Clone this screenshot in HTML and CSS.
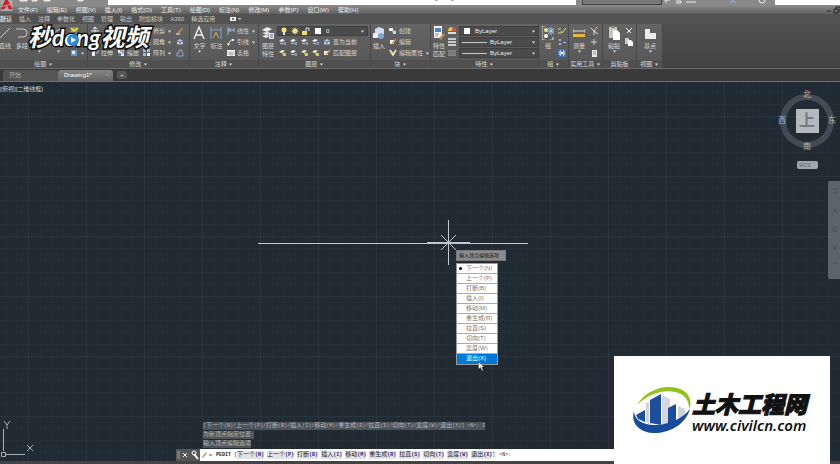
FILE: index.html
```html
<!DOCTYPE html>
<html lang="zh-CN">
<head>
    <meta charset="UTF-8">
    <title>Drawing1.dwg</title>
    <link rel="stylesheet" href="styles.css">
</head>
<body>
<svg class="defs" width="0" height="0">
    <symbol id="caret" viewBox="0 0 4 3"><path d="M0 0h4L2 3z" fill="#ddd"/></symbol>
    <symbol id="move" viewBox="0 0 8 8"><path d="M4 0v8M0 4h8M2 2l2-2 2 2M2 6l2 2 2-2" stroke="#e4e8ec" fill="none"/></symbol>
    <symbol id="copy" viewBox="0 0 8 8"><circle cx="3" cy="3" r="2" fill="none" stroke="#cfd8e0"/><circle cx="5" cy="5" r="2" fill="#cfd8e0"/></symbol>
    <symbol id="stretch" viewBox="0 0 8 8"><path d="M1 2h3v5H1z" fill="#eee"/><path d="M4 1h3v3H5" stroke="#9cb7d6" fill="none"/></symbol>
    <symbol id="scale" viewBox="0 0 8 8"><path d="M1 1h6v6H1z" fill="#eef"/><path d="M1 4h3v3H1z" fill="#4c78b0"/><path d="M3 2h3v3" stroke="#667" fill="none"/></symbol>
    <symbol id="array" viewBox="0 0 8 8"><path d="M0 0h3v3H0zM4 0h3v3H4zM0 4h3v3H0z" fill="#8fc0ee"/><path d="M4 4h3v3H4z" fill="#fff"/></symbol>
    <symbol id="pen" viewBox="0 0 8 8"><path d="M1 6L6 1l1 1-5 5z" fill="#d88b3f"/><path d="M0 7h4" stroke="#eee"/></symbol>
    <symbol id="box" viewBox="0 0 8 8"><path d="M1 3l3-2 3 2v3L4 7 1 6z" fill="#b9cee6"/><path d="M1 3l3 1 3-1M4 4v3" stroke="#5578a2" fill="none"/></symbol>
    <symbol id="offset" viewBox="0 0 8 8"><path d="M1 7V4h2V1h3v3h1v3z" fill="none" stroke="#8fa9c8"/></symbol>
    <symbol id="hatch" viewBox="0 0 8 8"><path d="M1 1h6v6H1z" fill="#6d94c6"/><path d="M2 2h3v3H2z" fill="#e4eefa"/></symbol>
    <symbol id="dim" viewBox="0 0 8 8"><path d="M1 0v8M7 1v4M1 3h6M3 1v4" stroke="#9cc0e6" fill="none"/></symbol>
    <symbol id="leader" viewBox="0 0 8 8"><path d="M1 7l3-5h3" stroke="#ddd" fill="none"/><path d="M0 5l3 1-2 2zM5 1h2v2H5z" fill="#eee"/></symbol>
    <symbol id="grid" viewBox="0 0 8 8"><path d="M0 1h8v6H0z" fill="#fff"/><path d="M0 3h8M0 5h8M3 3v4M5 3v4" stroke="#888" stroke-width=".6"/></symbol>
    <symbol id="layer" viewBox="0 0 8 8"><path d="M0 3l3-2 3 1-3 2z" fill="#f2f2f2"/><path d="M4 4h3v3H5z" fill="#7f9ec4"/><path d="M1 5l3 1" stroke="#ccc"/></symbol>
    <symbol id="layer-y" viewBox="0 0 8 8"><path d="M0 3l3-2 3 1-3 2z" fill="#f3f0c0"/><path d="M3 4h4v3H4z" fill="#d9c94a"/></symbol>
    <symbol id="bulb" viewBox="0 0 8 8"><circle cx="4" cy="3" r="2.5" fill="#f4ea7c"/><path d="M3 5h2v3H3z" fill="#ddd"/></symbol>
    <symbol id="sun" viewBox="0 0 8 8"><circle cx="4" cy="4" r="2.5" fill="#f8f3b0"/><path d="M4 0v8M0 4h8M1 1l6 6M7 1L1 7" stroke="#e5d66a" stroke-width=".6"/></symbol>
    <symbol id="lock" viewBox="0 0 8 8"><path d="M0 4h5v4H0z" fill="#e8de78"/><path d="M4 4V1h3v3" stroke="#ddd" fill="none"/></symbol>
    <symbol id="block" viewBox="0 0 8 8"><path d="M0 1h4v3H0z" fill="#eee"/><path d="M3 3l4 1v3H4z" fill="#c4d6ea"/></symbol>
    <symbol id="edit" viewBox="0 0 8 8"><path d="M1 2h4v4H1z" fill="#eee"/><path d="M3 6l4-5" stroke="#dd9448" stroke-width="1.5"/></symbol>
    <symbol id="tag" viewBox="0 0 8 8"><path d="M1 1l3 5 3-5" stroke="#eee" stroke-width="1.5" fill="none"/><circle cx="3" cy="4" r="1.5" fill="#e0d35e"/></symbol>
    <symbol id="wheel" viewBox="0 0 8 8"><path d="M0 4a4 4 0 0 1 4-4v4z" fill="#e6c640"/><path d="M4 0a4 4 0 0 1 4 4H4z" fill="#ce5b4a"/><path d="M0 5h8v2H0z" fill="#ddd"/></symbol>
    <symbol id="lines" viewBox="0 0 8 8"><path d="M0 1h8M0 4h8M0 7h8" stroke="#eee" stroke-width="1.5"/></symbol>
    <symbol id="lines-g" viewBox="0 0 8 8"><path d="M0 1h8v6H0z" fill="#888"/><path d="M0 3h8M0 5h8" stroke="#6c6c6c"/></symbol>
    <symbol id="check" viewBox="0 0 8 8"><path d="M0 2h3M0 6h3M3 4l1 2 4-5" stroke="#e3db7b" fill="none"/></symbol>
    <symbol id="dots" viewBox="0 0 8 8"><path d="M1 1h2v2H1zM1 5h2v2H1zM5 4h3v1H5z" fill="#9cb9dd"/></symbol>
    <symbol id="brackets" viewBox="0 0 8 8"><path d="M0 0h8v8H0z" fill="#3f74b4"/><path d="M3 2H2v4h1M5 2h1v4H5" stroke="#fff" fill="none"/><path d="M3 3h2v2H3z" fill="#fff"/></symbol>
    <symbol id="filter" viewBox="0 0 8 8"><path d="M1 1l3 3v4M7 0L4 4l4 3" stroke="#e6dfd8" fill="none"/><path d="M5 1h2v2H5z" fill="#d66a50"/></symbol>
    <symbol id="plus" viewBox="0 0 8 8"><path d="M4 1v6M1 4h6" stroke="#ccc"/></symbol>
    <symbol id="calc" viewBox="0 0 8 8"><path d="M2 1h5v7H2z" fill="#e6e6e6"/><path d="M3 3h3M3 5h3" stroke="#777" stroke-width=".7"/></symbol>
    <symbol id="cut" viewBox="0 0 8 8"><path d="M1 1l4 4M7 1L3 5" stroke="#eee" fill="none"/><path d="M2 5h1v1H2zM5 5h1v1H5z" fill="#eee"/></symbol>
    <symbol id="pages" viewBox="0 0 8 8"><path d="M0 0h4v6H0z" fill="#ccc"/><path d="M3 2h3l2 2v4H3z" fill="#fff"/></symbol>
</svg>

<div class="app">
    <header class="titlebar">
        <div class="quick">
            <svg width="82" height="12"><path d="M2 4h7v5H2zM14 3h5v6h-5zM26 3h6v6h-6zM40 7h8M60 5h5v4h-5zM74 6h5" fill="#ddd" stroke="#eee"/></svg>
        </div>
        <h1>Autodesk AutoCAD 2016 - Drawing1.dwg</h1>
        <div class="search">
            <input type="text" aria-label="搜索">
            <svg width="110" height="12"><path d="M2 8h6M4 5v6M14 9h5v2h-5M24 10h10" stroke="#eee" fill="none"/><path d="M68 6l6 5m0-5l-6 5" stroke="#9eb9e0"/><circle cx="100" cy="8" r="3" fill="none" stroke="#eee"/></svg>
        </div>
    </header>
    <svg class="app-logo" viewBox="0 0 13 12"><path d="M0 0h13v12H0z" fill="#aaa"/><path d="M0 10L5 0h3l5 10H9L7 6 4 10z" fill="#c3222a"/><path d="M2 7l8-2" stroke="#f0a0a0"/></svg>

    <nav class="menubar">
        <a href="#">文件(F)</a>
        <a href="#">编辑(E)</a>
        <a href="#">视图(V)</a>
        <a href="#">插入(I)</a>
        <a href="#">格式(O)</a>
        <a href="#">工具(T)</a>
        <a href="#">绘图(D)</a>
        <a href="#">标注(N)</a>
        <a href="#">修改(M)</a>
        <a href="#">参数(P)</a>
        <a href="#">窗口(W)</a>
        <a href="#">帮助(H)</a>
        <svg class="win" width="14" height="8"><path d="M1 5h4" stroke="#222"/><path d="M8 3h4v4H8zM10 3V1h4v4h-2" stroke="#222" fill="none"/></svg>
    </nav>

    <nav class="tabs">
        <a class="selected" href="#">默认</a>
        <a href="#">插入</a>
        <a href="#">注释</a>
        <a href="#">参数化</a>
        <a href="#">视图</a>
        <a href="#">管理</a>
        <a href="#">输出</a>
        <a href="#">附加模块</a>
        <a href="#">A360</a>
        <a href="#">精选应用</a>
        <svg width="12" height="6"><path d="M1 1h6v4H1z" fill="#eee"/><circle cx="4" cy="3" r="1" fill="#555"/><path d="M9 2h3l-1 2z" fill="#ddd"/></svg>
    </nav>

    <div class="ribbon">
        <section class="panel draw">
            <div class="body">
                <button class="big"><svg viewBox="0 0 12 14"><path d="M1 12L11 2" stroke="#ccc"/></svg>直线</button>
                <button class="big"><svg viewBox="0 0 12 14"><path d="M0 3h7a4 4 0 0 1 0 8H2" stroke="#ccc" fill="none"/></svg>多段</button>
                <button class="big mute" aria-label="圆"><svg viewBox="0 0 12 14"><circle cx="6" cy="7" r="5" stroke="#ccc" fill="none"/></svg><svg class="caret"><use href="#caret"/></svg></button>
                <button class="big mute" aria-label="圆弧"><svg viewBox="0 0 12 14"><path d="M1 12Q2 3 11 3" stroke="#ccc" fill="none"/></svg><svg class="caret"><use href="#caret"/></svg></button>
                <div class="col">
                    <button aria-label="矩形"><svg><use href="#offset"/></svg></button>
                    <button aria-label="椭圆"><svg><use href="#copy"/></svg></button>
                    <button aria-label="图案填充"><svg><use href="#hatch"/></svg><svg class="caret"><use href="#caret"/></svg></button>
                </div>
            </div>
            <h2>绘图 <svg class="caret"><use href="#caret"/></svg></h2>
        </section>

        <section class="panel modify">
            <div class="body">
                <div class="col">
                    <button aria-label="移动"><svg><use href="#move"/></svg></button>
                    <button aria-label="复制"><svg><use href="#copy"/></svg></button>
                    <button><svg><use href="#stretch"/></svg>拉伸</button>
                </div>
                <div class="col">
                    <button aria-label="旋转"><svg><use href="#move"/></svg></button>
                    <button aria-label="镜像"><svg><use href="#copy"/></svg></button>
                    <button><svg><use href="#scale"/></svg>缩放</button>
                </div>
                <div class="col">
                    <button><svg><use href="#edit"/></svg>修剪<svg class="caret"><use href="#caret"/></svg></button>
                    <button><svg><use href="#offset"/></svg>圆角<svg class="caret"><use href="#caret"/></svg></button>
                    <button><svg><use href="#array"/></svg>阵列<svg class="caret"><use href="#caret"/></svg></button>
                </div>
                <div class="col">
                    <button aria-label="删除"><svg><use href="#pen"/></svg></button>
                    <button aria-label="分解"><svg><use href="#box"/></svg></button>
                    <button aria-label="偏移"><svg><use href="#offset"/></svg></button>
                </div>
            </div>
            <h2>修改 <svg class="caret"><use href="#caret"/></svg></h2>
        </section>

        <section class="panel note">
            <div class="body">
                <button class="big"><svg viewBox="0 0 12 14"><path d="M1 13L6 1l5 12M3 9h6" stroke="#eee" stroke-width="1.4" fill="none"/></svg>文字<svg class="caret"><use href="#caret"/></svg></button>
                <button class="big"><svg viewBox="0 0 12 14"><path d="M1 1v12M11 1v12M1 4h10" stroke="#7da4d2" fill="none"/><path d="M3 12l3-5 3 5M6 6v3" stroke="#e5a04c" fill="none"/></svg>标注</button>
                <div class="col">
                    <button><svg><use href="#dim"/></svg>线性<svg class="caret"><use href="#caret"/></svg></button>
                    <button><svg><use href="#leader"/></svg>引线<svg class="caret"><use href="#caret"/></svg></button>
                    <button><svg><use href="#grid"/></svg>表格</button>
                </div>
            </div>
            <h2>注释 <svg class="caret"><use href="#caret"/></svg></h2>
        </section>

        <section class="panel layers">
            <div class="body">
                <button class="big"><svg viewBox="0 0 12 14"><path d="M0 4l5-3 5 2-5 3zM0 7l5 2 4-2-4-1zM0 10l4 2 4-2-4-1z" fill="#eee"/><path d="M7 7h5v6H7z" fill="#dfe8f2"/><path d="M8 9h3M8 11h3" stroke="#4f74a4"/></svg>图层<br>特性</button>
                <div class="col">
                    <div class="combo">
                        <svg><use href="#bulb"/></svg><svg><use href="#sun"/></svg><svg><use href="#lock"/></svg><i class="swatch"></i>
                        <select aria-label="图层"><option>0</option></select>
                        <svg class="caret"><use href="#caret"/></svg>
                    </div>
                    <div class="strip">
                        <svg><use href="#layer"/></svg><svg><use href="#layer"/></svg><svg><use href="#layer"/></svg><svg><use href="#layer"/></svg>
                        <button><svg><use href="#box"/></svg>置为当前</button>
                    </div>
                    <div class="strip">
                        <svg><use href="#layer-y"/></svg><svg><use href="#layer"/></svg><svg><use href="#layer-y"/></svg><svg><use href="#layer-y"/></svg>
                        <button><svg><use href="#edit"/></svg>匹配图层</button>
                    </div>
                </div>
            </div>
            <h2>图层 <svg class="caret"><use href="#caret"/></svg></h2>
        </section>

        <section class="panel blocks">
            <div class="body">
                <button class="big"><svg viewBox="0 0 12 14"><path d="M2 3l4-2 5 2v5l-5 1-4-2z" fill="#cfe0f2"/><circle cx="8" cy="10" r="3" fill="#7fa6d4"/><path d="M0 7h5v5H0z" fill="#eee"/></svg>插入</button>
                <div class="col">
                    <button><svg><use href="#block"/></svg>创建</button>
                    <button><svg><use href="#edit"/></svg>编辑</button>
                    <button><svg><use href="#tag"/></svg>编辑属性<svg class="caret"><use href="#caret"/></svg></button>
                </div>
            </div>
            <h2>块 <svg class="caret"><use href="#caret"/></svg></h2>
        </section>

        <section class="panel props">
            <div class="body">
                <button class="big"><svg viewBox="0 0 12 14"><path d="M1 0h8v12H1z" fill="#f2f2f2"/><path d="M2 2h6v4H2z" fill="#4f82c0"/><path d="M2 8h4M2 10h3" stroke="#999"/><path d="M6 12l5-5 1 2-4 5z" fill="#c98542"/></svg>特性<br>匹配</button>
                <div class="col icons">
                    <svg><use href="#wheel"/></svg>
                    <svg><use href="#lines"/></svg>
                    <svg><use href="#lines-g"/></svg>
                </div>
                <div class="col">
                    <div class="combo">
                        <i class="swatch"></i>
                        <select aria-label="对象颜色"><option>ByLayer</option></select>
                        <svg class="caret"><use href="#caret"/></svg>
                    </div>
                    <div class="combo">
                        <i class="rule"></i>
                        <select aria-label="线宽"><option>ByLayer</option></select>
                        <svg class="caret"><use href="#caret"/></svg>
                    </div>
                    <div class="combo">
                        <i class="rule"></i>
                        <select aria-label="线型"><option>ByLayer</option></select>
                        <svg class="caret"><use href="#caret"/></svg>
                    </div>
                </div>
            </div>
            <h2>特性 <svg class="caret"><use href="#caret"/></svg></h2>
        </section>

        <section class="panel group">
            <div class="body">
                <button class="big"><svg viewBox="0 0 12 14"><path d="M3 0H0v14h3M8 14h3v-3" stroke="#ddd" fill="none"/><circle cx="4" cy="4" r="2" fill="#ece68a"/><circle cx="4" cy="10" r="2" fill="#fff"/><path d="M9 1v8M5 5h7M6 2l6 6M12 2L6 8" stroke="#9ed0f8"/></svg>组</button>
                <div class="col icons">
                    <svg><use href="#check"/></svg>
                    <svg><use href="#dots"/></svg>
                    <svg><use href="#brackets"/></svg>
                </div>
            </div>
            <h2>组 <svg class="caret"><use href="#caret"/></svg></h2>
        </section>

        <section class="panel utils">
            <div class="body">
                <button class="big"><svg viewBox="0 0 12 14"><path d="M0 5h12M0 3v4M12 3v4" stroke="#ddd"/><path d="M0 8h12v3H0z" fill="#e2b53c"/></svg>测量<svg class="caret"><use href="#caret"/></svg></button>
                <div class="col icons">
                    <svg><use href="#filter"/></svg>
                    <svg><use href="#plus"/></svg>
                    <svg><use href="#calc"/></svg>
                </div>
            </div>
            <h2>实用工具 <svg class="caret"><use href="#caret"/></svg></h2>
        </section>

        <section class="panel clip">
            <div class="body">
                <button class="big"><svg viewBox="0 0 12 14"><path d="M1 1h8v11H1z" fill="#c9c4b8"/><path d="M3 0h4v2H3z" fill="#888"/><path d="M5 4h4l3 3v7H5z" fill="#fff"/></svg>粘贴<svg class="caret"><use href="#caret"/></svg></button>
                <div class="col icons">
                    <svg><use href="#cut"/></svg>
                    <svg><use href="#pages"/></svg>
                </div>
            </div>
            <h2>剪贴板</h2>
        </section>

        <section class="panel view">
            <div class="body">
                <button class="big"><svg viewBox="0 0 12 14"><path d="M1 3h5v4h6v6H1z" fill="#eee"/></svg>基点<svg class="caret"><use href="#caret"/></svg></button>
            </div>
            <h2>视图 <svg class="caret"><use href="#caret"/></svg></h2>
        </section>
    </div>

    <nav class="files">
        <a href="#">开始</a>
        <a class="selected" href="#">Drawing1*<span>×</span></a>
        <button aria-label="新图形">+</button>
    </nav>

    <main class="canvas">
        <svg class="drawing">
            <defs>
                <pattern id="cells" x="28" y="34" width="58" height="60" patternUnits="userSpaceOnUse">
                    <path d="M12.500 0v60M23.500 0v60M35.500 0v60M46.500 0v60M0 12.500h58M0 24.500h58M0 36.500h58M0 48.500h58" stroke="#242e37"/>
                    <path d="M.5 0v60M0 .5h58" stroke="#2a353e"/>
                </pattern>
            </defs>
            <rect width="100%" height="100%" fill="url(#cells)"/>
            <path d="M258 161.500h270M427 160.500h43M448.500 138v45M441 153l15 15M456 153l-15 15" stroke="#c3c9cd" fill="none"/>
            <path d="M3.500 347v22M6 372.500h19M1.500 370.500h4v4h-4zM4 339l3 4 3-4M7 343v4M27 363l6 6M33 363l-6 6" stroke="#aab0b4" fill="none"/>
        </svg>
        <p class="viewname">[-][俯视][二维线框]</p>

        <div class="cube">
            <span class="n">北</span>
            <span class="w">西</span>
            <button class="face">上</button>
            <span class="e">东</span>
            <span class="s">南</span>
        </div>
        <button class="wcs">WCS</button>
        <div class="navbar">
            <svg width="10" height="96"><path d="M5 8h4M5 12h4M5 28l4 4M9 28l-4 4M5 46h4v4H5zM5 64l2 4 2-4M5 82h4" stroke="#48505a" fill="none"/></svg>
        </div>

        <div class="prompt">输入顶点编辑选项</div>
        <menu class="options">
            <li><button class="default">下一个(N)</button></li>
            <li><button>上一个(P)</button></li>
            <li><button>打断(B)</button></li>
            <li><button>插入(I)</button></li>
            <li><button>移动(M)</button></li>
            <li><button>重生成(R)</button></li>
            <li><button>拉直(S)</button></li>
            <li><button>切向(T)</button></li>
            <li><button>宽度(W)</button></li>
            <li><button class="selected">退出(X)</button></li>
        </menu>
        <svg class="cursor" viewBox="0 0 6 9"><path d="M.5 0v7l2-1.500L4 9l1-.5L4 5h2z" fill="#fff" stroke="#333" stroke-width=".4"/></svg>

        <div class="command">
            <div class="history">
                <p>[<b>下一个</b>(N)/<b>上一个</b>(P)/<b>打断</b>(B)/<b>插入</b>(I)/<b>移动</b>(M)/<b>重生成</b>(R)/<b>拉直</b>(S)/<b>切向</b>(T)/<b>宽度</b>(W)/<b>退出</b>(X)] &lt;N&gt;: I</p>
                <p><b>为新顶点指定位置</b>:</p>
                <p><b>输入顶点编辑选项</b></p>
            </div>
            <div class="line">
                <svg class="grip" width="24" height="12"><path d="M1 2h3v8H1z" fill="#777"/><path d="M7 4l4 4M11 4L7 8" stroke="#fff"/><path d="M18 5l4 5" stroke="#fff" stroke-width="2"/><circle cx="18" cy="4" r="2" fill="none" stroke="#fff"/></svg>
                <svg width="12" height="12"><path d="M2 8l4-5 1 1-4 5z" fill="#a8a668"/><path d="M9 6h3" stroke="#555"/></svg>
                <strong>PEDIT</strong>
                <span>[</span>
                <div class="keys">
                    <button>下一个<kbd>(N)</kbd></button>
                    <button>上一个<kbd>(P)</kbd></button>
                    <button>打断<kbd>(B)</kbd></button>
                    <button>插入<kbd>(I)</kbd></button>
                    <button>移动<kbd>(M)</kbd></button>
                    <button>重生成<kbd>(R)</kbd></button>
                    <button>拉直<kbd>(S)</kbd></button>
                    <button>切向<kbd>(T)</kbd></button>
                    <button>宽度<kbd>(W)</kbd></button>
                    <button>退出<kbd>(X)</kbd></button>
                </div>
                <span>]</span>
                <span class="value">&lt;N&gt;:</span>
            </div>
        </div>
    </main>
    <footer class="status"></footer>
</div>

<div class="brand">
    <span>秒</span><span class="latin">dong</span><span>视频</span>
    <svg class="play" viewBox="0 0 14 20"><path d="M5 1l3 3 4-3" stroke="#f0e020" stroke-width="2" fill="none"/><circle cx="7" cy="13" r="6" fill="#2f86dc"/><path d="M5 10l5 3-5 3z" fill="#fff"/></svg>
</div>

<a class="site" href="#">
    <svg viewBox="0 0 60 48">
        <path d="M30 9l8 4v26h-8z" fill="#d5d7dc"/>
        <path d="M46 20l7 3v9l-7 4zM14 17l3-1v22l-3-2z" fill="#cfd2d7"/>
        <path d="M18 14l11-6v31l-11-2z" fill="#1c4e9e"/>
        <path d="M36 22l8-4v19l-8 2zM4 29l9-5v12l-7-3z" fill="#1c4e9e"/>
        <path d="M5 19C12 6 30-2 45 2c12 3 16 13 12 21 0-9-4-15-14-17C30 3 15 9 5 19z" fill="#93c21f"/>
        <path d="M2 25c0 9 10 15 23 14 14-1 26-7 33-16-4 14-18 23-33 24C10 48-2 39 2 25z" fill="#174a9c"/>
    </svg>
    <span class="name">土木工程网<small>www.civilcn.com</small></span>
</a>
</body>
</html>
```

FILE: styles.css
```css
*{
    margin:0;
    padding:0;
    box-sizing:border-box;
}
body{
    font-family:"Liberation Sans","Noto Sans CJK SC",sans-serif;
    font-size:6px;
    line-height:8px;
    color:#d8d8d8;
    background:#3a3a3a;
    overflow:hidden;
}
button,select,input{
    font:inherit;
    color:inherit;
    background:none;
    border:0;
}
a{
    color:inherit;
    text-decoration:none;
}
h1,h2{
    font-size:6px;
    font-weight:normal;
}
.defs{
    position:absolute;
}
.app{
    display:flex;
    flex-direction:column;
    height:100vh;
}

/* title bar, its upper half is outside of the window */
.titlebar{
    display:flex;
    flex:none;
    justify-content:space-between;
    height:13px;
    margin-top:-8px;
    background:#fff;
    line-height:13px;
    color:#555;
}
.quick{
    width:108px;
    padding-left:18px;
    background:#8a8a8a;
}
.titlebar h1{
    padding-left:114px;
}
.search{
    display:flex;
    width:199px;
    margin-right:65px;
    background:#8a8a8a;
}
.search input{
    width:80px;
    margin-left:6px;
    background:#777;
    border:1px solid #444;
}
.app-logo{
    position:absolute;
    left:0;
    top:0;
    width:13px;
    height:11px;
}
.menubar{
    display:flex;
    flex:none;
    align-items:center;
    gap:9px;
    height:9px;
    padding-left:18px;
    background:linear-gradient(#8c8c8c,#5e5e5e);
    color:#f0f0f0;
}
.menubar .win{
    margin-left:auto;
}
.tabs{
    display:flex;
    flex:none;
    align-items:center;
    gap:7px;
    height:10px;
    background:#525252;
    color:#c8c8c8;
}
.tabs svg{
    margin-left:7px;
}
.tabs .selected{
    background:#696969;
    color:#fff;
}

/* ribbon */
.ribbon{
    display:flex;
    flex:none;
    height:45px;
    background:linear-gradient(#505050,#424242);
    border-bottom:1px solid #6a6a6a;
}
.panel{
    display:flex;
    flex:none;
    flex-direction:column;
    justify-content:space-between;
    background:linear-gradient(#646464,#565656);
    border-right:1px solid #484848;
}
.panel h2{
    background:#505050;
    text-align:center;
}
.body{
    display:flex;
    gap:4px;
    padding:2px 2px 0 3px;
}
.big{
    display:flex;
    flex-direction:column;
    align-items:center;
    width:14px;
    white-space:nowrap;
}
.big svg{
    width:12px;
    height:14px;
    margin-bottom:2px;
}
.mute svg{
    margin-bottom:10px;
}
.col{
    display:flex;
    flex-direction:column;
    gap:1px;
}
.col button{
    display:flex;
    align-items:center;
    gap:2px;
    height:10px;
    white-space:nowrap;
}
.col svg{
    width:8px;
    height:8px;
}
.icons svg{
    margin:1px 0;
}
.big .caret,
.col .caret,
.caret{
    width:3px;
    height:3px;
    margin:0 1px;
}
.combo{
    display:flex;
    align-items:center;
    gap:3px;
    width:80px;
    height:10px;
    padding:0 2px;
    background:#4b4b4b;
    border:1px solid #404040;
    color:#eee;
}
.layers .combo{
    width:91px;
}
.combo select{
    flex:1;
    min-width:0;
    padding-left:2px;
    line-height:8px;
    appearance:none;
}
.swatch{
    width:6px;
    height:6px;
    margin-left:2px;
    background:#fff;
}
.rule{
    width:25px;
    height:1px;
    background:#ccc;
}
.rule + select{
    padding-left:0;
}
.strip{
    display:flex;
    align-items:center;
    gap:3px;
    height:10px;
    padding-left:2px;
}
.draw{
    width:88px;
}
.draw .body{
    gap:5px;
    padding-left:0;
}
.draw .big:first-child{
    width:10px;
}
.modify{
    width:102px;
}
.note{
    width:69px;
}
.layers{
    width:112px;
}
.layers .body,
.props .body{
    gap:3px;
}
.blocks{
    width:60px;
}
.props{
    width:108px;
}
.props .body,
.blocks .body{
    padding-left:2px;
}
.group{
    width:30px;
}
.utils,
.clip{
    width:34px;
}
.clip .body{
    padding-left:4px;
}
.view{
    width:26px;
}
.view .body{
    padding-left:6px;
}

/* drawing tabs */
.files{
    display:flex;
    flex:none;
    align-items:flex-end;
    height:13px;
    padding-left:3px;
    border-bottom:1px solid #707070;
    background:#3a3a3a;
    line-height:10px;
}
.files a{
    width:55px;
    height:11px;
    padding-left:6px;
    border-radius:3px 3px 0 0;
    background:#555;
    color:#aaa;
}
.files .selected{
    display:flex;
    justify-content:space-between;
    padding-right:4px;
    background:linear-gradient(#858585,#646464);
    color:#fff;
}
.files span{
    color:#999;
}
.files button{
    width:10px;
    height:8px;
    margin:0 0 2px 4px;
    border-radius:2px;
    background:#555;
    line-height:8px;
}

/* model space */
.canvas{
    flex:1;
    position:relative;
    overflow:hidden;
    background:#212b34;
}
.drawing{
    position:absolute;
    width:100%;
    height:100%;
}
.viewname{
    position:absolute;
    left:-5px;
    top:3px;
}
.cube{
    position:absolute;
    top:12px;
    right:6px;
    display:grid;
    place-items:center;
    width:54px;
    height:54px;
    border:6px solid #434c54;
    border-radius:50%;
    font-size:8px;
    color:#b4babe;
}
.cube span{
    position:absolute;
}
.n{
    top:-9px;
}
.s{
    bottom:-9px;
}
.w{
    left:-8px;
}
.e{
    right:-8px;
}
.face{
    width:23px;
    height:24px;
    background:#b5b9bc;
    font-size:16px;
    font-weight:bold;
    line-height:22px;
    color:#777c80;
}
.wcs{
    position:absolute;
    top:79px;
    right:22px;
    width:21px;
    height:8px;
    border-radius:2px;
    background:#a0a7ad;
    color:#59616a;
    font-size:5px;
    line-height:8px;
    text-align:left;
    padding-left:2px;
}
.navbar{
    position:absolute;
    top:99px;
    right:0;
    width:12px;
    border-radius:2px 0 0 2px;
    background:#5c646b;
}
.prompt{
    position:absolute;
    left:456px;
    top:168px;
    width:50px;
    padding:1px 2px;
    border:1px solid #777;
    background:#8b8b8b;
    color:#111;
    font-size:5px;
    line-height:7px;
    white-space:nowrap;
}
.options{
    position:absolute;
    left:456px;
    top:181px;
    width:42px;
    border:1px solid #999;
    background:#fff;
    color:#777;
    list-style:none;
}
.options button{
    display:block;
    position:relative;
    width:100%;
    height:10px;
    padding-left:9px;
    border-bottom:1px solid #aaa;
    text-align:left;
    line-height:9px;
}
.options .default:before{
    content:"";
    position:absolute;
    left:2px;
    top:3px;
    width:3px;
    height:3px;
    border-radius:50%;
    background:#000;
}
.options .selected{
    border-color:#0078d7;
    background:#0078d7;
    color:#fff;
}
.cursor{
    position:absolute;
    left:478px;
    top:280px;
    width:6px;
    height:9px;
}

/* command line */
.command{
    position:absolute;
    left:176px;
    right:180px;
    bottom:0;
    font-family:"Liberation Mono","Noto Sans CJK SC",monospace;
    font-size:5px;
}
.history{
    display:flex;
    flex-direction:column;
    align-items:flex-start;
    gap:1px;
    padding:0 0 1px 27px;
    color:#b4b8ba;
}
.history p{
    background:#4c5359;
    white-space:nowrap;
}
.history b,
.keys button{
    font-size:6px;
    font-weight:normal;
}
.line{
    display:flex;
    align-items:center;
    height:12px;
    background:#fff;
    color:#222;
    white-space:nowrap;
}
.line .grip{
    background:#555;
}
.line strong{
    margin:0 3px 0 4px;
}
.keys{
    display:flex;
    align-items:center;
    gap:3px;
}
.keys button{
    background:#e2e2e2;
}
.keys kbd{
    font-family:inherit;
    font-size:5px;
    font-weight:bold;
    color:#2a2a8c;
}
.value{
    margin-left:4px;
}
.status{
    flex:none;
    height:3px;
    background:#444;
}

/* overlays */
.brand{
    position:absolute;
    left:28px;
    top:22px;
    display:flex;
    align-items:baseline;
    font-family:"Noto Sans CJK SC",sans-serif;
    font-size:24px;
    font-weight:bold;
    font-style:italic;
    line-height:28px;
    color:#fff;
    -webkit-text-stroke:3px #111;
    paint-order:stroke fill;
}
.latin{
    font-family:Lato,sans-serif;
    font-size:23px;
}
.play{
    position:absolute;
    left:38px;
    top:5px;
    width:14px;
    height:20px;
}
.site{
    position:absolute;
    right:10px;
    bottom:0;
    display:flex;
    width:216px;
    height:108px;
    padding:30px 0 0 18px;
    background:#fff;
    color:#111;
}
.site svg{
    flex:none;
    width:60px;
    height:48px;
}
.name{
    font-family:"Noto Sans CJK SC",sans-serif;
    font-size:23px;
    font-weight:900;
    font-style:italic;
    line-height:24px;
    padding-top:5px;
    white-space:nowrap;
    -webkit-text-stroke:1px #111;
}
.name small{
    display:block;
    font-family:"Noto Sans",sans-serif;
    font-size:15px;
    font-weight:600;
    line-height:20px;
    -webkit-text-stroke:0;
}
```
